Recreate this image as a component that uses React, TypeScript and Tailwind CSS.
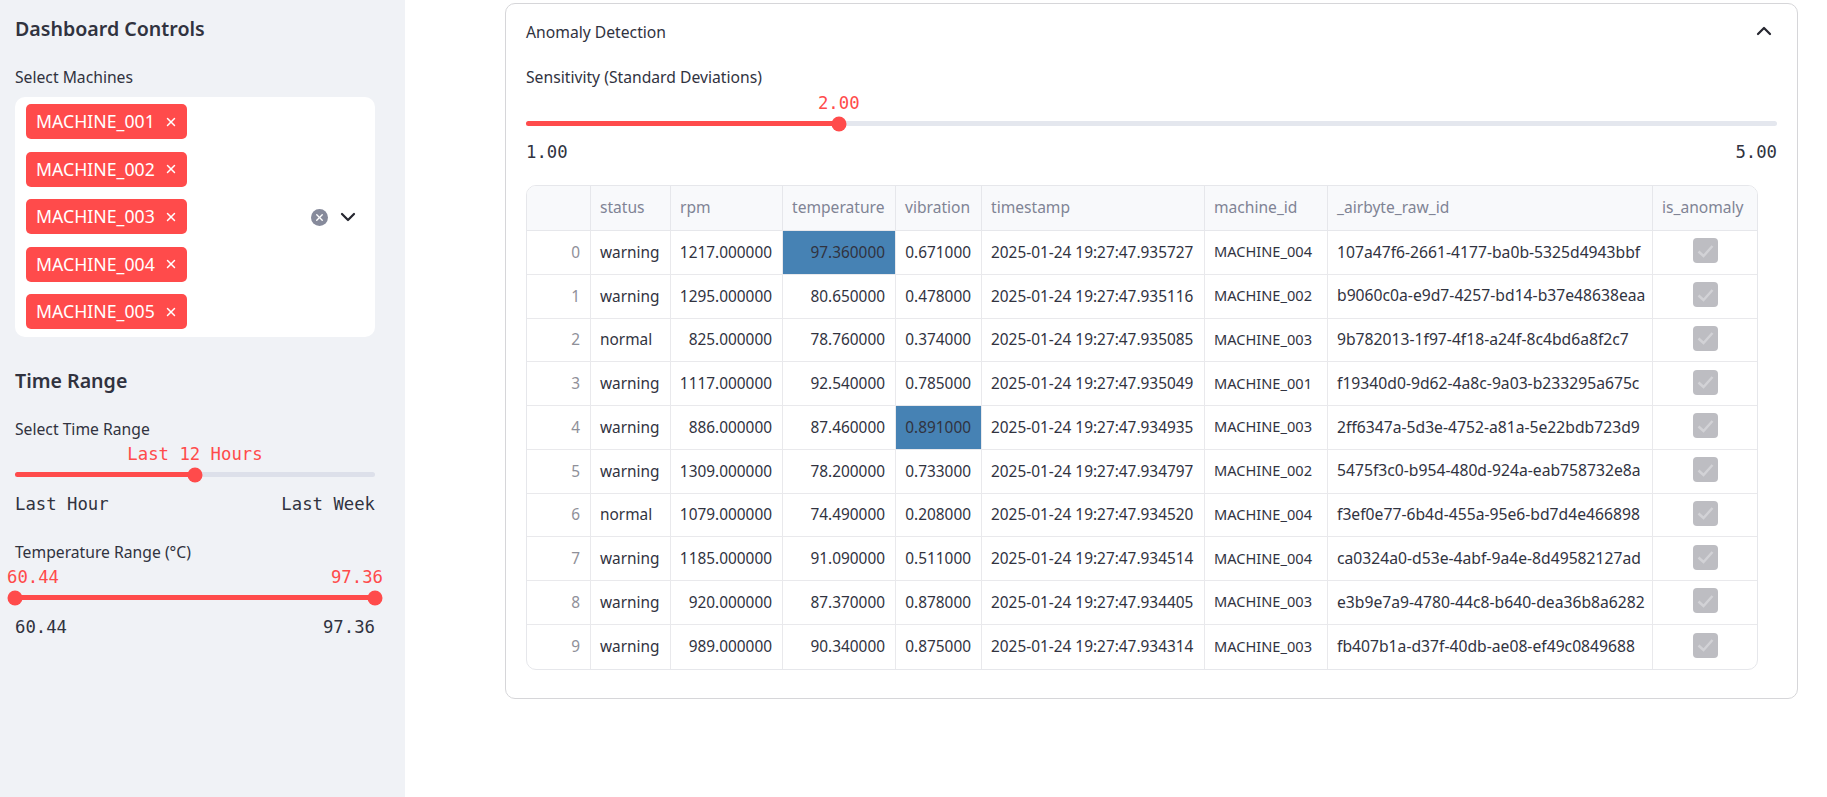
import { ChevronDown, ChevronUp, X } from "lucide-react";

const machines = ["MACHINE_001", "MACHINE_002", "MACHINE_003", "MACHINE_004", "MACHINE_005"];

const columns = ["", "status", "rpm", "temperature", "vibration", "timestamp", "machine_id", "_airbyte_raw_id", "is_anomaly"];

const rows = [
  ["warning", "1217.000000", "97.360000", "0.671000", "2025-01-24 19:27:47.935727", "MACHINE_004", "107a47f6-2661-4177-ba0b-5325d4943bbf"],
  ["warning", "1295.000000", "80.650000", "0.478000", "2025-01-24 19:27:47.935116", "MACHINE_002", "b9060c0a-e9d7-4257-bd14-b37e48638eaa"],
  ["normal", "825.000000", "78.760000", "0.374000", "2025-01-24 19:27:47.935085", "MACHINE_003", "9b782013-1f97-4f18-a24f-8c4bd6a8f2c7"],
  ["warning", "1117.000000", "92.540000", "0.785000", "2025-01-24 19:27:47.935049", "MACHINE_001", "f19340d0-9d62-4a8c-9a03-b233295a675c"],
  ["warning", "886.000000", "87.460000", "0.891000", "2025-01-24 19:27:47.934935", "MACHINE_003", "2ff6347a-5d3e-4752-a81a-5e22bdb723d9"],
  ["warning", "1309.000000", "78.200000", "0.733000", "2025-01-24 19:27:47.934797", "MACHINE_002", "5475f3c0-b954-480d-924a-eab758732e8a"],
  ["normal", "1079.000000", "74.490000", "0.208000", "2025-01-24 19:27:47.934520", "MACHINE_004", "f3ef0e77-6b4d-455a-95e6-bd7d4e466898"],
  ["warning", "1185.000000", "91.090000", "0.511000", "2025-01-24 19:27:47.934514", "MACHINE_004", "ca0324a0-d53e-4abf-9a4e-8d49582127ad"],
  ["warning", "920.000000", "87.370000", "0.878000", "2025-01-24 19:27:47.934405", "MACHINE_003", "e3b9e7a9-4780-44c8-b640-dea36b8a6282"],
  ["warning", "989.000000", "90.340000", "0.875000", "2025-01-24 19:27:47.934314", "MACHINE_003", "fb407b1a-d37f-40db-ae08-ef49c0849688"],
];

const gridCols = "grid grid-cols-[64px_80px_112px_113px_86px_223px_123px_325px_104px]";
const mono = "font-['DejaVu_Sans_Mono',monospace] text-[17.3px] leading-[22px]";
const label = "text-[15.7px] leading-[22px]";

function Thumb({ className }: { className: string }) {
  return <span className={`absolute top-1/2 w-[15px] h-[15px] -translate-x-1/2 -translate-y-1/2 rounded-full bg-[#ff4b4b] ${className}`} />;
}

function AnomalyTable() {
  return (
    <div className="w-[1232px] border border-[#e6e7eb] rounded-[10px] overflow-hidden text-[15.4px] text-[#31333f]">
      <div className={`${gridCols} h-[45px] bg-[#f8f9fb] border-b border-[#e6e7eb] text-[#808495] text-[15.6px]`}>
        {columns.map((c, i) => (
          <div key={i} className={`flex items-center pl-[9px] pr-[10px] whitespace-nowrap ${i < 8 ? "border-r border-[#e6e7eb]" : ""}`}>
            {c}
          </div>
        ))}
      </div>
      {rows.map((r, i) => (
        <div key={i} className={`${gridCols} h-[43.75px] ${i < 9 ? "border-b border-[#e9e9ec]" : ""}`}>
          <div className="flex items-center justify-end px-[10px] border-r border-[#e9e9ec] text-[#8f9099]">{i}</div>
          {r.map((v, j) => {
            const numeric = j >= 1 && j <= 3;
            const hot = (i === 0 && j === 2) || (i === 4 && j === 3);
            return (
              <div
                key={j}
                className={`flex items-center pl-[9px] pr-[10px] border-r border-[#e9e9ec] whitespace-nowrap ${numeric ? "justify-end" : ""} ${hot ? "bg-[#4682b4]" : ""} ${j === 5 ? "text-[14.6px]" : ""} ${j === 6 ? "text-[15.7px]" : ""}`}
              >
                {v}
              </div>
            );
          })}
          <div className="flex items-center justify-center">
            <span className="flex items-center justify-center w-[25px] h-[25px] -mt-[3px] rounded-[4px] bg-[#bdbdc2]">
              <svg width="17" height="14" viewBox="0 0 17 14" fill="none">
                <path d="M1.5 7.5 L6.5 12 L15.5 2" stroke="#d2d2d6" strokeWidth="2.5" />
              </svg>
            </span>
          </div>
        </div>
      ))}
    </div>
  );
}

export default function App() {
  return (
    <div className="flex w-[1827px] h-[797px] overflow-hidden bg-white text-[#31333f] font-['Noto_Sans',sans-serif]">
      <aside className="w-[405px] shrink-0 bg-[#f0f2f6] pl-[15px] pr-[30px] pt-[15px]">
        <h2 className="text-[19.6px] leading-[28px] font-semibold">Dashboard Controls</h2>
        <p className={`mt-[23px] ${label}`}>Select Machines</p>
        <div className="relative mt-[9px] h-[240px] bg-white rounded-[10px] pl-[11px] pt-[7px] flex flex-col gap-[12.5px]">
          {machines.map((m) => (
            <span key={m} className="flex items-center w-[161px] h-[35px] rounded-[5px] bg-[#ff4b4b] text-white pl-[10px] text-[17.7px]">
              {m}
              <X className="ml-auto mr-[9px] w-[14px] h-[14px]" strokeWidth={2.5} />
            </span>
          ))}
          <span className="absolute left-[296px] top-[112px] flex items-center justify-center w-[17px] h-[17px] rounded-full bg-[#868a9b] text-white">
            <X className="w-[11px] h-[11px]" strokeWidth={3} />
          </span>
          <ChevronDown className="absolute left-[321px] top-[108px] w-[24px] h-[24px] text-[#262730]" strokeWidth={2.25} />
        </div>

        <h3 className="mt-[30px] text-[19.6px] leading-[28px] font-semibold">Time Range</h3>
        <p className={`mt-[23px] ${label}`}>Select Time Range</p>
        <p className={`${mono} mt-[3px] text-center text-[#ff4b4b]`}>Last 12 Hours</p>
        <div className="relative mt-[7px] h-[5px] rounded-full bg-[#dde0ea]">
          <div className="w-1/2 h-full rounded-full bg-[#ff4b4b]" />
          <Thumb className="left-1/2" />
        </div>
        <div className={`${mono} mt-[16px] flex justify-between`}>
          <span>Last Hour</span>
          <span>Last Week</span>
        </div>
        <p className={`mt-[26px] ${label}`}>Temperature Range (°C)</p>
        <div className={`${mono} mt-[3px] -mx-[8px] flex justify-between text-[#ff4b4b]`}>
          <span>60.44</span>
          <span>97.36</span>
        </div>
        <div className="relative mt-[7px] h-[5px] rounded-full bg-[#ff4b4b]">
          <Thumb className="left-0" />
          <Thumb className="left-full" />
        </div>
        <div className={`${mono} mt-[16px] flex justify-between`}>
          <span>60.44</span>
          <span>97.36</span>
        </div>
      </aside>

      <main className="flex-1 pl-[100px] pt-[3px]">
        <section className="w-[1293px] h-[696px] border border-[#d6d6d9] rounded-[10px] px-[20px]">
          <div className="flex items-center justify-between h-[58px]">
            <span className="text-[15.7px]">Anomaly Detection</span>
            <ChevronUp className="mr-[1px] w-[24px] h-[24px] -mt-[5px] text-[#262730]" strokeWidth={2.25} />
          </div>
          <p className={`mt-[4px] ${label}`}>Sensitivity (Standard Deviations)</p>
          <div className="relative mt-[4px] h-[22px]">
            <span className={`${mono} absolute left-1/4 -translate-x-1/2 text-[#ff4b4b]`}>2.00</span>
          </div>
          <div className="relative mt-[7px] h-[5px] rounded-full bg-[#e4e7ee] w-[1251px]">
            <div className="w-1/4 h-full rounded-full bg-[#ff4b4b]" />
            <Thumb className="left-1/4" />
          </div>
          <div className={`${mono} mt-[15px] flex justify-between w-[1251px]`}>
            <span>1.00</span>
            <span>5.00</span>
          </div>
          <div className="mt-[22px]">
            <AnomalyTable />
          </div>
        </section>
      </main>
    </div>
  );
}
